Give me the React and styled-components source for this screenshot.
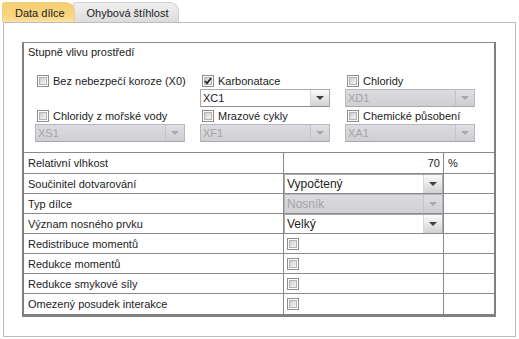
import React from 'react'
import styled, { createGlobalStyle } from 'styled-components'

const GlobalStyle = createGlobalStyle`
  html, body {
    margin: 0;
    padding: 0;
    background: #fff;
  }
  body {
    font-family: "Liberation Sans", Arial, sans-serif;
    font-size: 11px;
    color: #1c1c1c;
  }
`

const Screen = styled.div`
  width: 519px;
  height: 339px;
  padding-top: 2px;
  box-sizing: border-box;
  overflow: hidden;
  background: #fff;
`

const TabBar = styled.div`
  display: flex;
  height: 20px;
  padding-left: 2px;
`

const Tab = styled.div`
  height: 20px;
  line-height: 21px;
  box-sizing: border-box;
  border-radius: 3px 9px 0 0;
  color: #222;
  background: ${({ active }) =>
    active
      ? 'linear-gradient(to bottom, #f6cf72, #f8d680 70%, #fbe3a4)'
      : 'linear-gradient(to bottom, #f0f0f0, #dcdcdc)'};
  border: 1px solid ${({ active }) => (active ? '#f0d08a' : '#cfcfcf')};
  border-bottom: none;
  margin-right: ${({ active }) => (active ? '-2px' : '0')};
  position: relative;
  z-index: ${({ active }) => (active ? 2 : 1)};
  padding-left: ${({ active }) => (active ? '12px' : '13px')};
  padding-right: ${({ active }) => (active ? '9px' : '10px')};
`

const Panel = styled.div`
  margin-left: 3px;
  width: 513px;
  height: 315px;
  box-sizing: border-box;
  border: 1px solid #bcbcbc;
  padding: 19px 0 0 18px;
`

const Box = styled.div`
  width: 474px;
  box-sizing: border-box;
  border-top: 1px solid #8a8a8a;
  border-left: 2px solid #808080;
  border-right: 2px solid #808080;
  border-bottom: 3px solid #808080;
`

const Section = styled.div`
  height: 109px;
  box-sizing: border-box;
  padding-top: 2px;
`

const SectionTitle = styled.div`
  padding-left: 4px;
  line-height: 14px;
`

const EnvGrid = styled.div`
  margin-top: 13px;
  padding-left: 11px;
  display: grid;
  grid-template-columns: 150px 130px 130px;
  column-gap: 15px;
  grid-auto-rows: 35px;
`

const EnvCell = styled.div`
  display: flex;
  flex-direction: column;
`

const CheckRow = styled.label`
  display: flex;
  align-items: center;
  gap: 4px;
  height: 17px;
  padding-left: 2px;
  white-space: nowrap;
`

const CheckBox = styled.span`
  width: 12px;
  height: 12px;
  box-sizing: border-box;
  flex: none;
  display: inline-flex;
  align-items: center;
  justify-content: center;
  border: 1px solid #8e8e8e;
  box-shadow: inset 0 0 0 1px #fdfdfd, inset 0 0 0 2px #b4b4b4;
  background: linear-gradient(135deg, #bdbdbd, #e6e6e6 55%, #fafafa);
`

const SelectBox = styled.div`
  display: flex;
  height: ${({ h }) => h || 18}px;
  box-sizing: border-box;
  border: 1px solid ${({ disabled }) => (disabled ? '#b8b8bc' : '#aaaaaa')};
  border-bottom-color: ${({ disabled }) => (disabled ? '#a8a8ac' : '#8c8c8c')};
  background: ${({ disabled }) =>
    disabled ? 'linear-gradient(to bottom, #dcdce0, #cfcfd4)' : '#fff'};
  color: ${({ disabled }) => (disabled ? '#a4a4a8' : '#1c1c1c')};
`

const SelectValue = styled.div`
  flex: 1;
  padding-left: 2px;
  display: flex;
  align-items: center;
  font-size: ${({ big }) => (big ? 12 : 11)}px;
`

const ArrowButton = styled.div`
  width: 18px;
  flex: none;
  display: flex;
  align-items: center;
  justify-content: center;
  border-left: 1px solid ${({ disabled }) => (disabled ? '#c4c4c8' : '#d6d6d6')};
  background: ${({ disabled }) =>
    disabled
      ? 'linear-gradient(to bottom, #e0e0e4, #cdcdd2)'
      : 'linear-gradient(to bottom, #fbfbfb, #e6e6e6 50%, #d2d2d2)'};
`

const Triangle = styled.span`
  width: 0;
  height: 0;
  border-left: 4px solid transparent;
  border-right: 4px solid transparent;
  border-top: 4px solid ${({ disabled }) => (disabled ? '#a8a8ac' : '#404040')};
`

const PropTable = styled.div`
  border-top: 1px solid #8a8a8a;
`

const PropRow = styled.div`
  display: grid;
  grid-template-columns: 260px 160px 1fr;
  height: ${({ first }) => (first ? 21 : 20)}px;
  box-sizing: border-box;
  border-bottom: ${({ last }) => (last ? 'none' : '1px solid #8a8a8a')};
`

const Cell = styled.div`
  display: flex;
  align-items: ${({ stretch }) => (stretch ? 'stretch' : 'center')};
  box-sizing: border-box;
  border-right: ${({ noLine }) => (noLine ? 'none' : '1px solid #8a8a8a')};
  padding-left: ${({ pl }) => (pl === undefined ? 4 : pl)}px;
  justify-content: ${({ right }) => (right ? 'flex-end' : 'flex-start')};
  padding-right: ${({ right }) => (right ? 3 : 0)}px;
  white-space: nowrap;
  overflow: hidden;
`

const CellSelect = styled.div`
  flex: 1;
`

const Check = ({ checked }) => (
  <CheckBox>
    {checked && (
      <svg width="8" height="8" viewBox="0 0 8 8">
        <path d="M1 4 L3 6.2 L7 1.2" fill="none" stroke="#1a1a1a" strokeWidth="1.7" />
      </svg>
    )}
  </CheckBox>
)

const Select = ({ value, disabled, h, big }) => (
  <SelectBox disabled={disabled} h={h}>
    <SelectValue big={big}>{value}</SelectValue>
    <ArrowButton disabled={disabled}>
      <Triangle disabled={disabled} />
    </ArrowButton>
  </SelectBox>
)

const envItems = [
  { label: 'Bez nebezpečí koroze (X0)' },
  { label: 'Karbonatace', checked: true, value: 'XC1' },
  { label: 'Chloridy', value: 'XD1', disabled: true },
  { label: 'Chloridy z mořské vody', value: 'XS1', disabled: true },
  { label: 'Mrazové cykly', value: 'XF1', disabled: true },
  { label: 'Chemické působení', value: 'XA1', disabled: true }
]

const rows = [
  { label: 'Relativní vlhkost', kind: 'number', value: '70', unit: '%' },
  { label: 'Součinitel dotvarování', kind: 'select', value: 'Vypočtený' },
  { label: 'Typ dílce', kind: 'select', value: 'Nosník', disabled: true },
  { label: 'Význam nosného prvku', kind: 'select', value: 'Velký' },
  { label: 'Redistribuce momentů', kind: 'check' },
  { label: 'Redukce momentů', kind: 'check' },
  { label: 'Redukce smykové síly', kind: 'check' },
  { label: 'Omezený posudek interakce', kind: 'check' }
]

const renderValue = row => {
  if (row.kind === 'number') {
    return (
      <Cell right pl={0}>
        {row.value}
      </Cell>
    )
  }
  if (row.kind === 'select') {
    return (
      <Cell pl={0} stretch>
        <CellSelect>
          <Select value={row.value} disabled={row.disabled} h={20} big />
        </CellSelect>
      </Cell>
    )
  }
  return (
    <Cell pl={3}>
      <Check />
    </Cell>
  )
}

export default function App() {
  return (
    <Screen>
      <GlobalStyle />
      <TabBar>
        <Tab active>Data dílce</Tab>
        <Tab>Ohybová štíhlost</Tab>
      </TabBar>
      <Panel>
        <Box>
          <Section>
            <SectionTitle>Stupně vlivu prostředí</SectionTitle>
            <EnvGrid>
              {envItems.map(item => (
                <EnvCell key={item.label}>
                  <CheckRow>
                    <Check checked={item.checked} />
                    {item.label}
                  </CheckRow>
                  {item.value && (
                    <Select value={item.value} disabled={item.disabled} />
                  )}
                </EnvCell>
              ))}
            </EnvGrid>
          </Section>
          <PropTable>
            {rows.map((row, index) => (
              <PropRow
                key={row.label}
                first={index === 0}
                last={index === rows.length - 1}
              >
                <Cell>{row.label}</Cell>
                {renderValue(row)}
                <Cell noLine pl={4}>
                  {row.unit}
                </Cell>
              </PropRow>
            ))}
          </PropTable>
        </Box>
      </Panel>
    </Screen>
  )
}
